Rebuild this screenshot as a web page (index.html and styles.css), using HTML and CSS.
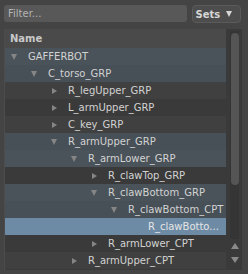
FILE: index.html
```html
<!DOCTYPE html>
<html>
<head>
<meta charset="utf-8">
<link rel="stylesheet" href="styles.css">
</head>
<body>
<div class="app">
  <div class="toolbar">
    <div class="filter">Filter...</div>
    <div class="sets">Sets <span class="caret"></span></div>
  </div>
  <div class="panel">
    <div class="tree">
      <div class="header">Name</div>
      <div class="row anc d0"><span class="tw down"></span><span class="label">GAFFERBOT</span></div>
      <div class="row anc alt d1"><span class="tw down"></span><span class="label">C_torso_GRP</span></div>
      <div class="row d2"><span class="tw right"></span><span class="label">R_legUpper_GRP</span></div>
      <div class="row alt d2"><span class="tw right"></span><span class="label">L_armUpper_GRP</span></div>
      <div class="row d2"><span class="tw right"></span><span class="label">C_key_GRP</span></div>
      <div class="row anc alt d2"><span class="tw down"></span><span class="label">R_armUpper_GRP</span></div>
      <div class="row anc d3"><span class="tw down"></span><span class="label">R_armLower_GRP</span></div>
      <div class="row alt d4"><span class="tw right"></span><span class="label">R_clawTop_GRP</span></div>
      <div class="row anc d4"><span class="tw down"></span><span class="label">R_clawBottom_GRP</span></div>
      <div class="row anc alt d5"><span class="tw down"></span><span class="label">R_clawBottom_CPT</span></div>
      <div class="row sel d6"><span class="tw"></span><span class="label">R_clawBotto...</span></div>
      <div class="row alt d4"><span class="tw right"></span><span class="label">R_armLower_CPT</span></div>
      <div class="row d3"><span class="tw right"></span><span class="label">R_armUpper_CPT</span></div>
    </div>
    <div class="scroll">
      <div class="track"><div class="handle"></div></div>
      <div class="btn"><span class="up"></span></div>
      <div class="btn"><span class="dn"></span></div>
    </div>
  </div>
</div>
</body>
</html>
```

FILE: styles.css
```css
html, body {
  margin: 0;
  padding: 0;
  background: #444444;
}
.app {
  width: 248px;
  height: 274px;
  font-family: "DejaVu Sans", sans-serif;
  font-size: 10px;
  color: #d2d2d2;
  display: flex;
  flex-direction: column;
}
.toolbar {
  display: flex;
  gap: 5px;
  padding: 5px 7px 0 4px;
  height: 18px;
}
.filter {
  width: 181px;
  height: 17px;
  background: #585858;
  border-radius: 3px;
  padding-left: 4px;
  line-height: 17px;
  color: #b4b4b4;
}
.sets {
  width: 45px;
  height: 16px;
  border: 1px solid #5a5a5a;
  background: #4d4d4d;
  border-radius: 4px;
  font-weight: bold;
  color: #d6d6d6;
  display: flex;
  align-items: center;
  padding-left: 3px;
  gap: 6px;
  box-sizing: content-box;
}
.caret {
  width: 0;
  height: 0;
  border-left: 3.5px solid transparent;
  border-right: 3.5px solid transparent;
  border-top: 6px solid #d6d6d6;
}
.panel {
  margin: 6px 6px 0 4px;
  height: 241px;
  display: flex;
  background: #3a3a3a;
  border-left: 1px solid #4c4c4c;
}
.tree {
  width: 222px;
  display: flex;
  flex-direction: column;
}
.header {
  height: 19px;
  line-height: 19px;
  background: #4a4a4a;
  font-weight: bold;
  color: #c8c8c8;
  padding-left: 5px;
}
.row {
  height: 17px;
  display: flex;
  align-items: center;
  background: #404040;
  white-space: nowrap;
  overflow: hidden;
}
.row.alt { background: #3a3a3a; }
.row.anc { background: #4a525a; }
.row.anc.alt { background: #474f57; }
.row.sel { background: #6d8ba5; color: #e4e4e4; }
.tw {
  width: 10px;
  height: 7px;
  margin-right: 9px;
  flex: none;
  display: flex;
  justify-content: center;
  align-items: center;
}
.tw.down::before {
  content: "";
  border-left: 3.5px solid transparent;
  border-right: 3.5px solid transparent;
  border-top: 6px solid #858585;
}
.tw.right::before {
  content: "";
  border-top: 3.5px solid transparent;
  border-bottom: 3.5px solid transparent;
  border-left: 5px solid #858585;
}
.d0 { padding-left: 4px; }
.d1 { padding-left: 24px; }
.d2 { padding-left: 44px; }
.d3 { padding-left: 64px; }
.d4 { padding-left: 84px; }
.d5 { padding-left: 104px; }
.d6 { padding-left: 124px; }
.scroll {
  width: 15px;
  display: flex;
  flex-direction: column;
  align-items: center;
  padding-left: 1px;
}
.track {
  margin-top: 2px;
  width: 9px;
  height: 208px;
  background: #353535;
  display: flex;
  justify-content: center;
}
.handle {
  margin-top: 2px;
  width: 8px;
  height: 152px;
  border-radius: 4px;
  background: #555555;
}
.btn {
  height: 14px;
  display: flex;
  align-items: center;
  justify-content: center;
}
.up {
  border-left: 4px solid transparent;
  border-right: 4px solid transparent;
  border-bottom: 6px solid #8a8a8a;
}
.dn {
  border-left: 4px solid transparent;
  border-right: 4px solid transparent;
  border-top: 6px solid #8a8a8a;
}
```
